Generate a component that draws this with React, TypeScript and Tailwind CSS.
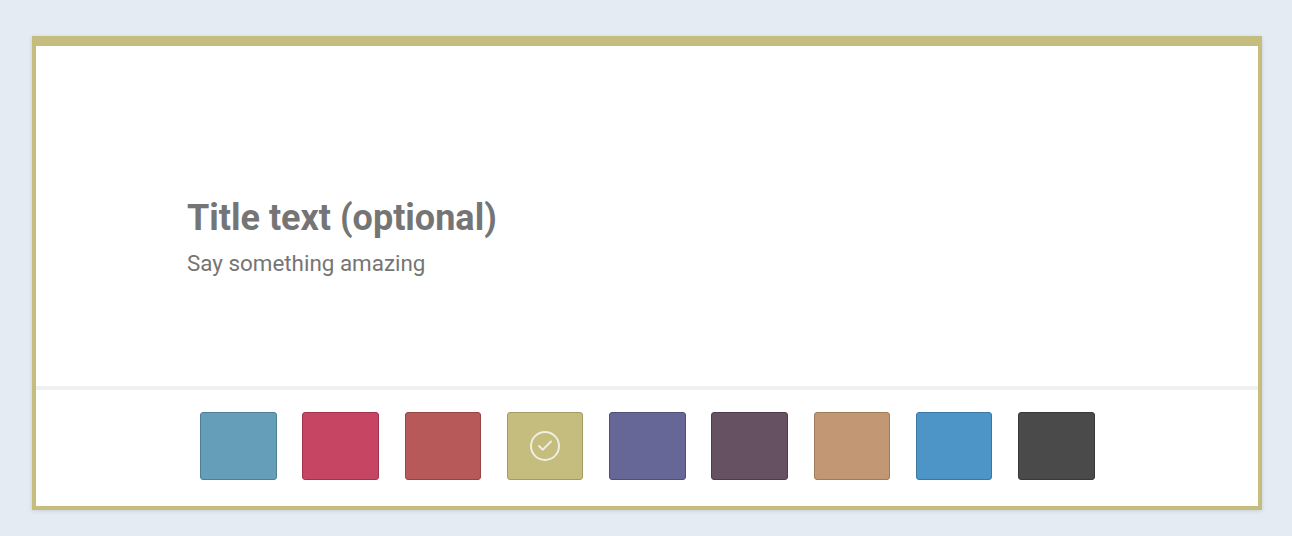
import { Check } from "lucide-react";

const swatches = [
  { bg: "bg-[#659eb8]", border: "border-[#4f7f96]" },
  { bg: "bg-[#c64562]", border: "border-[#a3344d]" },
  { bg: "bg-[#b75859]", border: "border-[#964445]" },
  { bg: "bg-[#c4bd7e]", border: "border-[#a39c62]", selected: true },
  { bg: "bg-[#666796]", border: "border-[#4f5078]" },
  { bg: "bg-[#655162]", border: "border-[#4e3d4c]" },
  { bg: "bg-[#c29874]", border: "border-[#a07b5b]" },
  { bg: "bg-[#4d94c7]", border: "border-[#3a77a3]" },
  { bg: "bg-[#4a4a4a]", border: "border-[#393939]" },
];

export default function App() {
  return (
    <div className="min-h-[536px] bg-[#e4ebf3] pt-[36px] pl-[32px] font-['Roboto',sans-serif]">
      <div className="w-[1230px] h-[474px] border-[#c4bd7e] border-x-4 border-b-4 border-t-[10px] bg-white shadow-[0_1px_4px_rgba(0,0,0,0.12)] flex flex-col">
        <div className="h-[340px] pt-[152px] pl-[151px]">
          <h1 className="text-[36px] leading-[40px] font-bold text-[#757575]">Title text (optional)</h1>
          <p className="mt-[11px] text-[22.4px] leading-[28px] text-[#757575]">Say something amazing</p>
        </div>
        <div className="h-[4px] bg-[#eef0f2]" />
        <div className="flex gap-[25.75px] pt-[22px] pl-[164px]">
          {swatches.map((s, i) => (
            <div
              key={i}
              className={`w-[76.5px] h-[68px] rounded-[3px] border ${s.bg} ${s.border} flex items-center justify-center`}
            >
              {s.selected && (
                <div className="w-[30px] h-[30px] rounded-full border-2 border-[#f0eee0] flex items-center justify-center">
                  <Check size={18} strokeWidth={2.5} className="text-[#f0eee0]" />
                </div>
              )}
            </div>
          ))}
        </div>
      </div>
    </div>
  );
}
